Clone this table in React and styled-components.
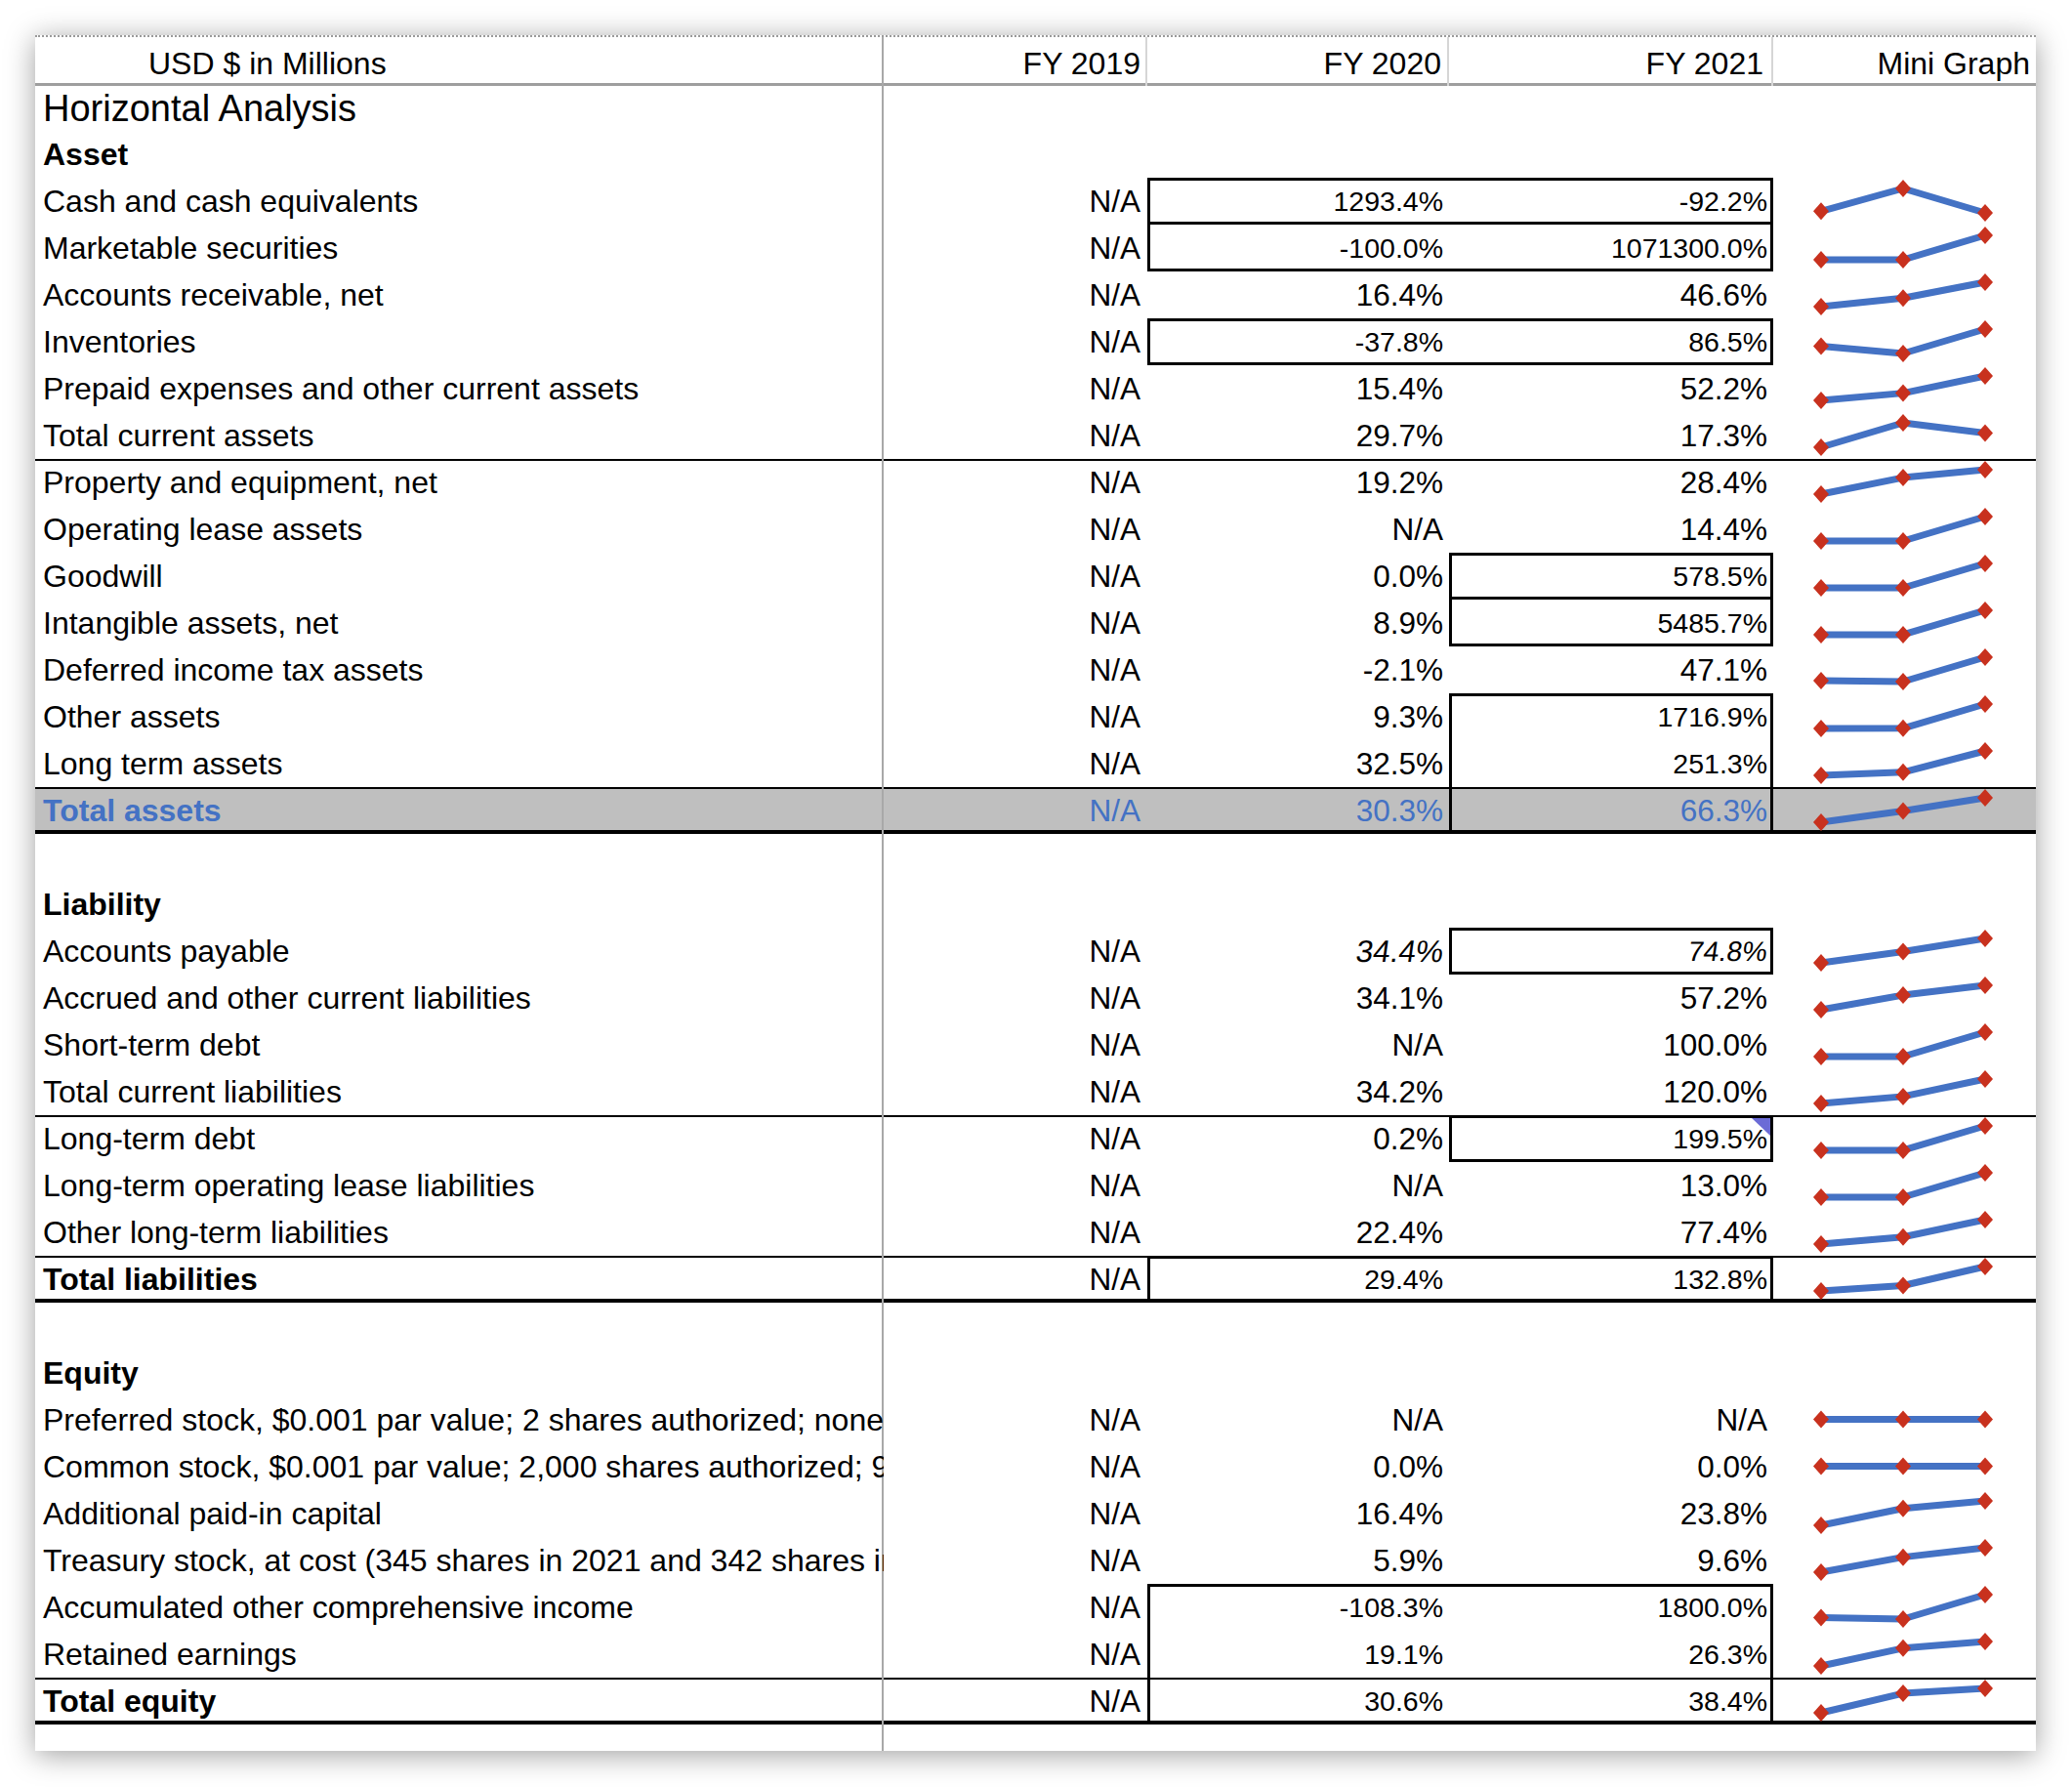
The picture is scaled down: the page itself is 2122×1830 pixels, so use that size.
import styled, { createGlobalStyle } from "styled-components"

const GlobalStyle = createGlobalStyle`
  html, body {
    margin: 0;
    padding: 0;
    background: #fff;
  }
  body {
    font-family: "Liberation Sans", Arial, Helvetica, sans-serif;
    color: #000;
  }
`

const COLS = "869px 270px 309px 332px 269px"

const Page = styled.div`
  width: 2122px;
  height: 1830px;
  padding: 36px 0 0 36px;
  box-sizing: border-box;
`

const Sheet = styled.div`
  width: 2049px;
  background: #fff;
  border-top: 2px dotted #9a9a9a;
  box-shadow: 0 4px 28px rgba(0, 0, 0, 0.38);
`

const HeaderRow = styled.div`
  display: grid;
  grid-template-columns: ${COLS};
  height: 50px;
  box-shadow: inset 0 -3px 0 #9e9e9e;
`

const HeaderCell = styled.div`
  display: flex;
  align-items: center;
  justify-content: ${p => (p.$left ? "flex-start" : "flex-end")};
  padding: 4px ${p => p.$pr || 0}px 0 ${p => p.$pl || 0}px;
  font-size: 32px;
  white-space: nowrap;
  box-shadow: ${p => (p.$sep ? `inset -2px 0 0 ${p.$sep}` : "none")};
`

const insetLines = ({ $t, $b, $l, $r }) => {
  const s = []
  if ($t) s.push(`inset 0 ${$t}px 0 #000`)
  if ($b) s.push(`inset 0 -${$b}px 0 #000`)
  if ($l) s.push(`inset ${$l}px 0 0 #000`)
  if ($r) s.push(`inset -${$r}px 0 0 #000`)
  return s.length ? s.join(", ") : "none"
}

const Row = styled.div`
  display: grid;
  grid-template-columns: ${COLS};
  height: ${p => p.$h || 48}px;
  background: ${p => (p.$total ? "#bfbfbf" : "transparent")};
  color: ${p => (p.$total ? "#4472c4" : "#000")};
  box-shadow: ${insetLines};
`

const Label = styled.div`
  display: flex;
  align-items: center;
  padding-left: 8px;
  font-size: ${p => p.$size || 32}px;
  font-weight: ${p => (p.$bold ? 700 : 400)};
  white-space: nowrap;
  overflow: hidden;
  box-shadow: inset -2px 0 0 #a8a8a8;
`

const Cell = styled.div`
  position: relative;
  display: flex;
  align-items: center;
  justify-content: flex-end;
  padding-right: ${p => p.$pr || 6}px;
  font-size: ${p => (p.$small ? 28.5 : 31.5)}px;
  white-space: nowrap;
  box-shadow: ${insetLines};
`

const Value = styled.span`
  display: inline-block;
  transform: ${p => (p.$skew ? "skewX(-8deg)" : "none")};
`

const GraphCell = styled.div`
  position: relative;
  display: flex;
`

const Comment = styled.span`
  position: absolute;
  top: 3px;
  right: 3px;
  width: 19px;
  height: 18px;
  background: #6b6bd6;
  clip-path: polygon(0 0, 100% 0, 100% 100%);
`

const rows = [
  { label: "Horizontal Analysis", kind: "title", h: 46 },
  { label: "Asset", kind: "section" },
  { label: "Cash and cash equivalents", v: ["N/A", "1293.4%", "-92.2%"], c: "tbl", d: "tbr" },
  { label: "Marketable securities", v: ["N/A", "-100.0%", "1071300.0%"], c: "bl", d: "br" },
  { label: "Accounts receivable, net", v: ["N/A", "16.4%", "46.6%"] },
  { label: "Inventories", v: ["N/A", "-37.8%", "86.5%"], c: "tbl", d: "tbr" },
  { label: "Prepaid expenses and other current assets", v: ["N/A", "15.4%", "52.2%"] },
  { label: "Total current assets", v: ["N/A", "29.7%", "17.3%"] },
  { label: "Property and equipment, net", v: ["N/A", "19.2%", "28.4%"], line: [2, 0] },
  { label: "Operating lease assets", v: ["N/A", "N/A", "14.4%"] },
  { label: "Goodwill", v: ["N/A", "0.0%", "578.5%"], d: "tblr" },
  { label: "Intangible assets, net", v: ["N/A", "8.9%", "5485.7%"], d: "blr" },
  { label: "Deferred income tax assets", v: ["N/A", "-2.1%", "47.1%"] },
  { label: "Other assets", v: ["N/A", "9.3%", "1716.9%"], d: "tlr" },
  { label: "Long term assets", v: ["N/A", "32.5%", "251.3%"], d: "lr" },
  { label: "Total assets", v: ["N/A", "30.3%", "66.3%"], d: "lr", line: [2, 4], total: true, bold: true },
  { kind: "blank" },
  { label: "Liability", kind: "section" },
  { label: "Accounts payable", v: ["N/A", "34.4%", "74.8%"], d: "tblr", skew: true },
  { label: "Accrued and other current liabilities", v: ["N/A", "34.1%", "57.2%"] },
  { label: "Short-term debt", v: ["N/A", "N/A", "100.0%"] },
  { label: "Total current liabilities", v: ["N/A", "34.2%", "120.0%"] },
  { label: "Long-term debt", v: ["N/A", "0.2%", "199.5%"], d: "tblr", line: [2, 0], comment: true },
  { label: "Long-term operating lease liabilities", v: ["N/A", "N/A", "13.0%"] },
  { label: "Other long-term liabilities", v: ["N/A", "22.4%", "77.4%"] },
  { label: "Total liabilities", v: ["N/A", "29.4%", "132.8%"], c: "tl", d: "tr", line: [2, 4], bold: true },
  { kind: "blank" },
  { label: "Equity", kind: "section" },
  { label: "Preferred stock, $0.001 par value; 2 shares authorized; none issued", v: ["N/A", "N/A", "N/A"] },
  { label: "Common stock, $0.001 par value; 2,000 shares authorized; 958 and 951 shares issued", v: ["N/A", "0.0%", "0.0%"] },
  { label: "Additional paid-in capital", v: ["N/A", "16.4%", "23.8%"] },
  { label: "Treasury stock, at cost (345 shares in 2021 and 342 shares in 2020)", v: ["N/A", "5.9%", "9.6%"] },
  { label: "Accumulated other comprehensive income", v: ["N/A", "-108.3%", "1800.0%"], c: "tl", d: "tr" },
  { label: "Retained earnings", v: ["N/A", "19.1%", "26.3%"], c: "l", d: "r" },
  { label: "Total equity", v: ["N/A", "30.6%", "38.4%"], c: "l", d: "r", line: [2, 4], bold: true },
]

const edges = (spec = "") => ({
  $t: spec.includes("t") ? 3 : 0,
  $b: spec.includes("b") ? 3 : 0,
  $l: spec.includes("l") ? 3 : 0,
  $r: spec.includes("r") ? 3 : 0,
})

function Spark({ values }) {
  const nums = values.map(v => (v === "N/A" ? 0 : parseFloat(v)))
  const min = Math.min(...nums)
  const max = Math.max(...nums)
  const xs = [49, 133, 217]
  const pts = nums.map((n, i) => [xs[i], max === min ? 23.5 : 36 - ((n - min) / (max - min)) * 25])
  return (
    <svg width="269" height="48" style={{ overflow: "visible" }}>
      <polyline
        points={pts.map(p => p.join(",")).join(" ")}
        fill="none"
        stroke="#4472c4"
        strokeWidth="7"
        strokeLinejoin="round"
        strokeLinecap="round"
      />
      {pts.map(([x, y], i) => (
        <polygon key={i} points={`${x - 8},${y} ${x},${y - 9} ${x + 8},${y} ${x},${y + 9}`} fill="#c8311e" />
      ))}
    </svg>
  )
}

function SheetRow({ row }) {
  const [lt, lb] = row.line || [0, 0]
  if (row.kind === "blank" || row.kind === "section" || row.kind === "title") {
    return (
      <Row $h={row.h}>
        <Label $bold={row.kind === "section"} $size={row.kind === "title" ? 38 : 32}>
          {row.label}
        </Label>
        <div />
        <div />
        <div />
        <div />
      </Row>
    )
  }
  const c = edges(row.c)
  const d = edges(row.d)
  const small = key => Boolean(row[key]) && !row.total
  return (
    <Row $t={lt} $b={lb} $total={row.total}>
      <Label $bold={row.bold}>{row.label}</Label>
      <Cell $pr={7}>{row.v[0]}</Cell>
      <Cell {...c} $t={Math.max(c.$t, lt)} $small={small("c")}>
        <Value $skew={row.skew}>{row.v[1]}</Value>
      </Cell>
      <Cell {...d} $t={Math.max(d.$t, lt)} $small={small("d")}>
        <Value $skew={row.skew}>{row.v[2]}</Value>
        {row.comment && <Comment />}
      </Cell>
      <GraphCell>
        <Spark values={row.v} />
      </GraphCell>
    </Row>
  )
}

export default function App() {
  return (
    <Page>
      <GlobalStyle />
      <Sheet>
        <HeaderRow>
          <HeaderCell $left $pl={116} $sep="#a8a8a8">USD $ in Millions</HeaderCell>
          <HeaderCell $pr={7} $sep="#d6d6d6">FY 2019</HeaderCell>
          <HeaderCell $pr={8} $sep="#d6d6d6">FY 2020</HeaderCell>
          <HeaderCell $pr={10} $sep="#d6d6d6">FY 2021</HeaderCell>
          <HeaderCell $pr={6}>Mini Graph</HeaderCell>
        </HeaderRow>
        {rows.map((row, i) => (
          <SheetRow key={i} row={row} />
        ))}
        <Row $h={27}>
          <Label />
          <div />
          <div />
          <div />
          <div />
        </Row>
      </Sheet>
    </Page>
  )
}
